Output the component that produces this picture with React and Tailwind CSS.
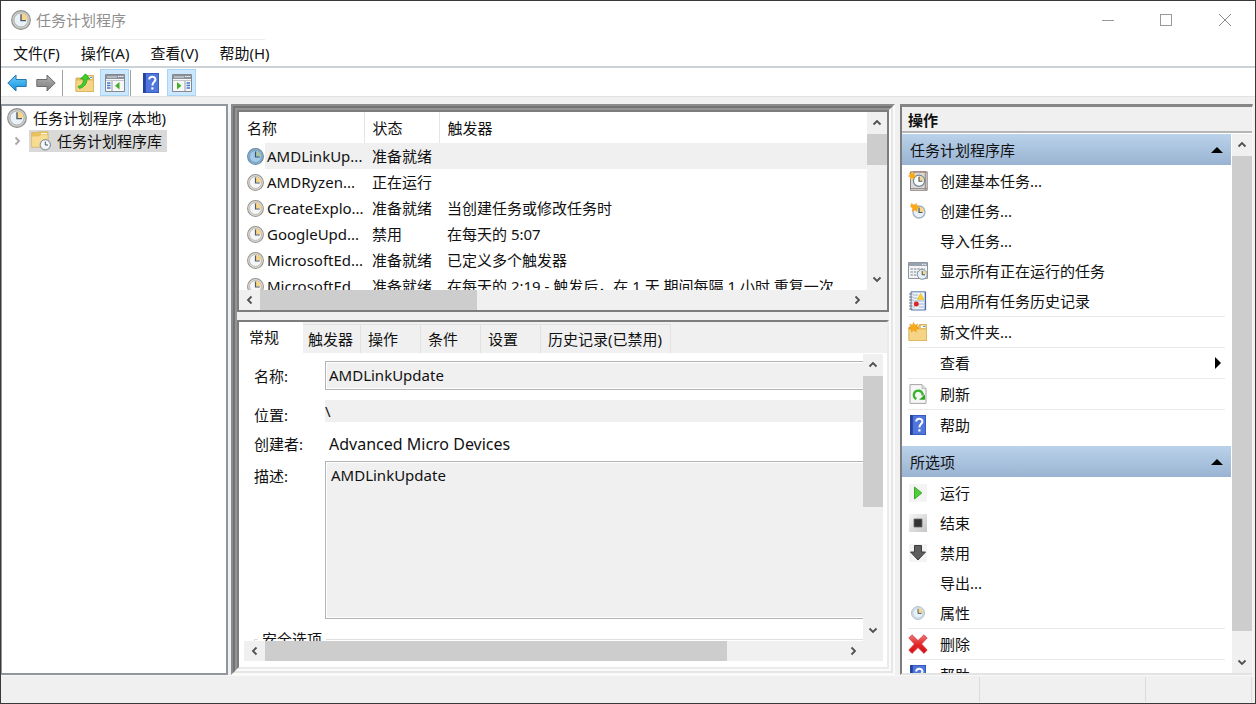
import { useState } from 'react';
import clsx from 'clsx';

const tasks = [
  { name: 'AMDLinkUp...', status: '准备就绪', trigger: '' },
  { name: 'AMDRyzen...', status: '正在运行', trigger: '' },
  { name: 'CreateExplo...', status: '准备就绪', trigger: '当创建任务或修改任务时' },
  { name: 'GoogleUpd...', status: '禁用', trigger: '在每天的 5:07' },
  { name: 'MicrosoftEd...', status: '准备就绪', trigger: '已定义多个触发器' },
  {
    name: 'MicrosoftEd...',
    status: '准备就绪',
    trigger: '在每天的 2:19 - 触发后，在 1 天 期间每隔 1 小时 重复一次',
  },
];

const tabs = [
  { label: '触发器', width: 'w-[58px] pl-[5px]' },
  { label: '操作', width: 'w-[60px] pl-[7px]' },
  { label: '条件', width: 'w-[60px] pl-[7px]' },
  { label: '设置', width: 'w-[60px] pl-[7px]' },
  { label: '历史记录(已禁用)', width: 'w-[130px] pl-[7px]' },
];

/* ---------- Icons ---------- */

const Clock = ({ className, rim = '#8e8e8e', ring = '#cfcfcb', face = '#e9f1f9', wedge = '#f8d58c', hand = '#4c5b68' }) => (
  <svg viewBox="0 0 20 20" className={className} aria-hidden="true">
    <circle cx="10" cy="10" r="9.3" fill={ring} stroke={rim} strokeWidth="1.2" />
    <circle cx="10" cy="10" r="7" fill={face} stroke={rim} strokeWidth="0.6" />
    <path d="M10 10V3.2A6.8 6.8 0 0 1 16.8 10Z" fill={wedge} />
    <path d="M10 4.2V10.6H15" fill="none" stroke={hand} strokeWidth="1.4" />
  </svg>
);

const BackArrow = () => (
  <svg viewBox="0 0 20 18" className="h-[18px] w-5" aria-hidden="true">
    <defs>
      <linearGradient id="back" x1="0" y1="0" x2="0" y2="1">
        <stop offset="0" stopColor="#6fd0fb" />
        <stop offset="1" stopColor="#0d8fe0" />
      </linearGradient>
    </defs>
    <path d="M.8 9 9 1V5.5H19.2V12.5H9V17Z" fill="url(#back)" stroke="#2677ad" strokeLinejoin="round" />
  </svg>
);

const ForwardArrow = () => (
  <svg viewBox="0 0 20 18" className="h-[18px] w-5" aria-hidden="true">
    <defs>
      <linearGradient id="fwd" x1="0" y1="0" x2="0" y2="1">
        <stop offset="0" stopColor="#b3b3b3" />
        <stop offset="1" stopColor="#7d7d7d" />
      </linearGradient>
    </defs>
    <path d="M19.2 9 11 1V5.5H.8V12.5H11V17Z" fill="url(#fwd)" stroke="#6e6e6e" strokeLinejoin="round" />
  </svg>
);

const FolderBase = () => (
  <>
    <path d="M1 5H10L11.5 2.5H18.5V18.5H1Z" fill="#e9c25b" stroke="#cfa648" strokeWidth="0.8" />
    <path d="M13 3.5H17.5V6H13Z" fill="#fff" />
    <path d="M15 4H17.3V5H15Z" fill="#4c92d6" />
    <path d="M1 7H18.5V18.5H1Z" fill="#f5d585" stroke="#d8b45a" strokeWidth="0.8" />
  </>
);

const FolderUp = () => (
  <svg viewBox="0 0 20 20" className="size-5" aria-hidden="true">
    <FolderBase />
    <path d="M3 13.5C7 12.5 8.5 10 8.5 6H5.5L10.5 .8 15 6H12C12 11 9 14.2 4.5 15.5Z" fill="#3fcf2b" stroke="#23921a" strokeWidth="0.7" />
  </svg>
);

const FolderClock = () => (
  <svg viewBox="0 0 20 20" className="size-5" aria-hidden="true">
    <path d="M.6 1.5H7L8 .8H17V16H.6Z" fill="#e9c25b" stroke="#d2ab52" strokeWidth="0.6" />
    <path d="M10 2H16V4H10Z" fill="#fffbe8" />
    <path d="M.6 5H8L10 3.6H17V16H.6Z" fill="#f8dc92" stroke="#deb95f" strokeWidth="0.6" />
    <circle cx="14.3" cy="13.8" r="5.2" fill="#e2e8ec" stroke="#7d8a91" />
    <circle cx="14.3" cy="13.8" r="3.8" fill="#f5f9fc" />
    <path d="M14.3 10.6V14H17" fill="none" stroke="#47565e" />
  </svg>
);

const Star = () => (
  <path
    d="M5.6.5 6.8 3.2 9.8 2.2 8.4 4.8 11 6.4 8 7 8.2 10 5.8 8 3.4 10 3.6 7 .4 6.4 3 4.8 1.6 2.2 4.5 3.2Z"
    fill="#fca918"
    stroke="#e98a08"
    strokeWidth="0.5"
  />
);

const FolderNew = () => (
  <svg viewBox="0 0 20 20" className="size-5" aria-hidden="true">
    <FolderBase />
    <Star />
  </svg>
);

const PaneIcon = ({ flip }) => (
  <svg viewBox="0 0 20 18" className="h-[18px] w-5" aria-hidden="true">
    <path d="M.5.5H19.5V17.5H.5Z" fill="#f7f7f7" stroke="#85898e" />
    <path d="M1 1H19V5H1Z" fill="#8a929c" />
    <path d="M2 3H12" stroke="#dde2e7" />
    <path d="M13 2.5H14.5M15.2 2.5H16.6M17.2 2.5H18.4" stroke="#fff" strokeWidth="1.2" />
    <path d="M1 6.5H19" stroke="#c1c6cc" />
    {flip ? (
      <>
        <path d="M13 7V17" stroke="#9aa0a6" />
        <path d="M14.5 9H18M14.5 11.5H18M14.5 14H18" stroke="#3e78c6" strokeWidth="1.3" />
        <path d="M5 8 9.5 11.8 5 15.5Z" fill="#42b02c" />
      </>
    ) : (
      <>
        <path d="M7 7V17" stroke="#9aa0a6" />
        <path d="M2 9H5.5M2 11.5H5.5M2 14H5.5" stroke="#3e78c6" strokeWidth="1.3" />
        <path d="M14.5 8 10 11.8 14.5 15.5Z" fill="#42b02c" />
      </>
    )}
  </svg>
);

const HelpIcon = () => (
  <svg viewBox="0 0 16 20" className="h-5 w-4 shrink-0" aria-hidden="true">
    <path d="M0 0H16V20H0Z" fill="#3455bd" />
    <path d="M3 .8H15.2V19.2H3Z" fill="#5076dc" />
    <path d="M0 0H2.5V20H0Z" fill="#25429f" />
    <path d="M6.2 6.6C6.2 2.6 12.6 2.8 12.4 6.6 12.2 9.2 9.4 9 9.4 12.4" fill="none" stroke="#fff" strokeWidth="2" />
    <path d="M8.3 14.3H10.5V16.5H8.3Z" fill="#fff" />
  </svg>
);

const BasicTaskIcon = () => (
  <svg viewBox="0 0 20 20" className="size-5" aria-hidden="true">
    <path d="M2.5.8H19.2V19.3H2.5Z" fill="#dcdad8" stroke="#8d8380" />
    <path d="M17.3 1V19M3 17.5H19" stroke="#9b8f8b" strokeWidth="1.2" />
    <path d="M5 1H18" stroke="#a4756b" />
    <circle cx="11" cy="9.8" r="5.6" fill="#fff" stroke="#6f8694" strokeWidth="1.2" />
    <path d="M11 9.8V5A4.8 4.8 0 0 1 15.8 9.8Z" fill="#f6d58c" />
    <path d="M11 5.8V10.2H14.4" fill="none" stroke="#38505e" strokeWidth="1.1" />
    <path d="M3.5 0 4.6 2.4 7.4 1.6 6.2 4 8.6 5.2 6 6 6.2 8.6 4 7 2 8.6 2 6 -.4 5.2 1.8 4 .8 1.8 3 2.4Z" fill="#fca918" />
  </svg>
);

const NewTaskIcon = () => (
  <svg viewBox="0 0 20 20" className="size-5" aria-hidden="true">
    <circle cx="11" cy="11" r="6" fill="#e8f1f7" stroke="#9fb0bb" strokeWidth="1.3" />
    <path d="M11 11V5.8A5.2 5.2 0 0 1 16.2 11Z" fill="#f8d58c" />
    <path d="M11 6.8V11.5H14.5" fill="none" stroke="#3f5664" strokeWidth="1.2" />
    <path d="M3.4 2.4 6 4 8.6 2.4 8.8 5 11.4 6.2 9.2 7.8 9.2 10.6 6.6 9 4 10.4 4.6 7.4 2.6 5.4Z" fill="#fca918" stroke="#ee9410" strokeWidth="0.4" />
  </svg>
);

const RunningIcon = () => (
  <svg viewBox="0 0 20 18" className="h-[18px] w-5" aria-hidden="true">
    <path d="M.5.5H19.5V16.5H.5Z" fill="#f4f4f4" stroke="#8f959c" />
    <path d="M1 1H19V4H1Z" fill="#98a2b0" />
    <path d="M14 2.3H15.4M16.4 2.3H18" stroke="#fff" />
    <path d="M2.5 7H17M2.5 10H10M2.5 13H9" stroke="#9ea7b1" strokeWidth="1.4" strokeDasharray="2.4 1" />
    <circle cx="14.2" cy="12.4" r="4.9" fill="#eaf1f6" stroke="#7f929e" />
    <path d="M14.2 12.4V8.4A4 4 0 0 1 18.2 12.4Z" fill="#f8d58c" />
    <path d="M14.2 9V12.8H17" fill="none" stroke="#3f5664" />
  </svg>
);

const HistoryIcon = () => (
  <svg viewBox="0 0 20 20" className="size-5" aria-hidden="true">
    <path d="M3 .8H17.5V19H3Z" fill="#eef3fa" stroke="#5b79a8" />
    <path d="M17.4 1V19" stroke="#4a6aa0" strokeWidth="1.4" />
    <path d="M5 4H10M5 7H9M5 10H16M11 13H16M11 16H16M5 16H7" stroke="#9fb4d4" />
    <path d="M1 3H4.5M1 6H4.5M1 9H4.5M1 12H4.5M1 15H4.5M1 18H4.5" stroke="#7d7d7d" strokeWidth="1.1" />
    <path d="M12.6 2.4 16 8.4H9.2Z" fill="#fad22c" stroke="#d7ac16" strokeWidth="0.5" />
    <circle cx="8.3" cy="13" r="2.5" fill="#d8262c" />
  </svg>
);

const RefreshIcon = () => (
  <svg viewBox="0 0 20 20" className="size-5" aria-hidden="true">
    <path d="M2 .6H14L18 4.6V19.4H2Z" fill="#f6f6f6" stroke="#a5a5a5" />
    <path d="M14 .6V4.6H18" fill="#ddd" stroke="#b0b0b0" strokeWidth="0.8" />
    <path d="M8.4 15A4.4 4.4 0 1 1 14.6 11.6" fill="none" stroke="#38b52b" strokeWidth="2.4" />
    <path d="M11 15.8H17V10.4Z" fill="#2fa524" />
  </svg>
);

const RunIcon = () => (
  <svg viewBox="0 0 18 18" className="size-[18px]" aria-hidden="true">
    <path d="M0 0H18V18H0Z" fill="#f4f4f4" />
    <path d="M5.5 3 12.8 9 5.5 15Z" fill="#4fce38" stroke="#2fa01f" strokeWidth="0.9" />
  </svg>
);

const EndIcon = () => (
  <svg viewBox="0 0 18 18" className="size-[18px]" aria-hidden="true">
    <defs>
      <linearGradient id="end" x1="0" y1="0" x2="1" y2="1">
        <stop offset="0" stopColor="#f8f8f8" />
        <stop offset="1" stopColor="#c4c4c4" />
      </linearGradient>
    </defs>
    <path d="M0 0H18V18H0Z" fill="url(#end)" />
    <path d="M5 5H13V13H5Z" fill="#333" stroke="#6a6a6a" strokeWidth="0.8" />
  </svg>
);

const DisableIcon = () => (
  <svg viewBox="0 0 18 18" className="size-[18px]" aria-hidden="true">
    <path d="M0 0H18V18H0Z" fill="#f4f4f4" />
    <path d="M5.5 1.5H12.5V8H16.5L9 16 1.5 8H5.5Z" fill="#5e5e5e" stroke="#3c3c3c" strokeLinejoin="round" />
  </svg>
);

const DeleteIcon = () => (
  <svg viewBox="0 0 20 20" className="size-5" aria-hidden="true">
    <defs>
      <linearGradient id="del" x1="0" y1="0" x2="0" y2="1">
        <stop offset="0" stopColor="#f07a7a" />
        <stop offset="0.5" stopColor="#e3282a" />
        <stop offset="1" stopColor="#d80f12" />
      </linearGradient>
    </defs>
    <path
      d="M4 .8 10 6.6 16 .8 19.2 4 13.6 10 19.2 16 16 19.4 10 13.6 4 19.4 .8 16 6.4 10 .8 4Z"
      fill="url(#del)"
      stroke="#c9383a"
      strokeWidth="0.7"
      strokeLinejoin="round"
    />
  </svg>
);

const chevrons = {
  up: 'M1.5 6.5 5 3 8.5 6.5',
  down: 'M1.5 3.5 5 7 8.5 3.5',
  left: 'M6.5 1.5 3 5 6.5 8.5',
  right: 'M3.5 1.5 7 5 3.5 8.5',
};

const Chevron = ({ dir, className = 'size-[10px] text-[#505050]' }) => (
  <svg viewBox="0 0 10 10" className={className} aria-hidden="true">
    <path d={chevrons[dir]} fill="none" stroke="currentColor" strokeWidth="1.8" />
  </svg>
);

/* ---------- Shared parts ---------- */

const ScrollBar = ({ horizontal, thumb, className }) => {
  const arrow = clsx('flex shrink-0 items-center justify-center', horizontal ? 'h-5 w-[21px]' : 'h-[22px] w-5');

  return (
    <div className={clsx('flex shrink-0 bg-[#f0f0f0]', horizontal ? 'h-5' : 'w-5 flex-col', className)}>
      <button type="button" aria-label={horizontal ? '向左滚动' : '向上滚动'} className={arrow}>
        <Chevron dir={horizontal ? 'left' : 'up'} />
      </button>
      <div className="min-h-0 min-w-0 flex-1">
        <div className={clsx('bg-[#cdcdcd]', thumb)} />
      </div>
      <button type="button" aria-label={horizontal ? '向右滚动' : '向下滚动'} className={arrow}>
        <Chevron dir={horizontal ? 'right' : 'down'} />
      </button>
    </div>
  );
};

const actionGroups = [
  {
    title: '任务计划程序库',
    items: [
      { label: '创建基本任务...', icon: <BasicTaskIcon /> },
      { label: '创建任务...', icon: <NewTaskIcon /> },
      { label: '导入任务...' },
      { label: '显示所有正在运行的任务', icon: <RunningIcon /> },
      { label: '启用所有任务历史记录', icon: <HistoryIcon />, divider: true },
      { label: '新文件夹...', icon: <FolderNew />, divider: true },
      { label: '查看', submenu: true, divider: true },
      { label: '刷新', icon: <RefreshIcon />, divider: true },
      { label: '帮助', icon: <HelpIcon /> },
    ],
  },
  {
    title: '所选项',
    items: [
      { label: '运行', icon: <RunIcon /> },
      { label: '结束', icon: <EndIcon /> },
      { label: '禁用', icon: <DisableIcon /> },
      { label: '导出...' },
      { label: '属性', icon: <Clock className="size-[14px]" rim="#a9bac5" ring="#d5e0e7" />, divider: true },
      { label: '删除', icon: <DeleteIcon />, divider: true },
      { label: '帮助', icon: <HelpIcon /> },
    ],
  },
];

/* ---------- Window sections ---------- */

const TitleBar = () => (
  <header className="flex h-[38px] shrink-0 items-center bg-white pr-px pl-[10px]">
    <Clock className="size-5" />
    <h1 className="ml-[5px] flex-1 pb-px text-[#8f8f8f]">任务计划程序</h1>
    <button type="button" aria-label="最小化" className="flex h-full w-[58px] items-center justify-center">
      <span className="h-px w-3 bg-[#999]" />
    </button>
    <button type="button" aria-label="最大化" className="flex h-full w-[58px] items-center justify-center">
      <span className="size-3 border border-[#999]" />
    </button>
    <button type="button" aria-label="关闭" className="flex h-full w-[59px] items-center justify-center">
      <svg viewBox="0 0 12 12" className="size-3" aria-hidden="true">
        <path d="M0 0 12 12M12 0 0 12" stroke="#8a8a8a" />
      </svg>
    </button>
  </header>
);

const MenuBar = () => (
  <nav className="h-[29px] shrink-0 border-b-2 border-[#ccd3d8] bg-white">
    <div className="flex h-full w-[264px] items-center gap-[21px] border-t border-[#ececec] pb-px pl-3 whitespace-nowrap">
      {['文件(F)', '操作(A)', '查看(V)', '帮助(H)'].map((label) => (
        <button key={label} type="button">
          {label}
        </button>
      ))}
    </div>
  </nav>
);

const ToolBar = () => (
  <div className="flex h-[29px] shrink-0 items-center border-b border-[#e3e3e3] bg-white pt-px pl-[6px]">
    <button type="button" aria-label="后退">
      <BackArrow />
    </button>
    <button type="button" aria-label="前进" className="ml-[9px]">
      <ForwardArrow />
    </button>
    <span className="ml-[6px] h-[26px] w-px bg-[#a0a0a0]" />
    <button type="button" aria-label="向上" className="ml-3">
      <FolderUp />
    </button>
    <button
      type="button"
      aria-label="显示/隐藏控制台树"
      className="ml-[5px] flex h-[27px] w-[29px] items-center justify-center border border-[#a9d6f8] bg-[#cce8ff]"
    >
      <PaneIcon />
    </button>
    <span className="ml-px h-[26px] w-px bg-[#a0a0a0]" />
    <button type="button" aria-label="帮助" className="ml-3">
      <HelpIcon />
    </button>
    <button
      type="button"
      aria-label="显示/隐藏操作窗格"
      className="ml-2 flex h-[27px] w-[29px] items-center justify-center border border-[#a9d6f8] bg-[#cce8ff]"
    >
      <PaneIcon flip />
    </button>
  </div>
);

const TreePane = () => (
  <aside className="w-[227px] shrink-0 border-2 border-l border-[#8f969d] bg-white">
    <div className="flex h-6 items-center pl-[5px]">
      <Clock className="size-5" />
      <span className="ml-[6px]">任务计划程序 (本地)</span>
    </div>
    <div className="flex h-[22px] items-center pl-[10px]">
      <Chevron dir="right" className="size-[10px] text-[#a6a6a6]" />
      <div className="ml-[7px] flex h-[22px] items-center bg-[#d9d9d9] pr-[5px] pl-[2px]">
        <FolderClock />
        <span className="ml-[6px] pb-px">任务计划程序库</span>
      </div>
    </div>
  </aside>
);

const TaskList = () => {
  const [selected, setSelected] = useState(0);

  return (
    <section className="flex h-[202px] shrink-0 flex-col border-2 border-[#7d7d7d] bg-[#f0f0f0]">
      <div className="flex min-h-0 flex-1">
        <div className="min-w-0 flex-1 overflow-hidden bg-white">
          <table className="w-full table-fixed border-collapse text-left whitespace-nowrap">
            <thead>
              <tr className="h-[31px]">
                <th className="w-[125px] border-r border-[#e5e5e5] pl-2 font-normal">名称</th>
                <th className="w-[75px] border-r border-[#e5e5e5] pl-2 font-normal">状态</th>
                <th className="pl-2 font-normal">触发器</th>
              </tr>
            </thead>
            <tbody>
              {tasks.map((task, i) => {
                const bg = i === selected && 'bg-[#f0f0f0]';
                return (
                  <tr key={i} className="h-[26px]" onClick={() => setSelected(i)}>
                    <td className="p-0">
                      <div className="flex h-[26px] items-center pl-2">
                        {i === selected ? (
                          <Clock className="size-[17px] shrink-0" rim="#6688a3" ring="#86b2d3" face="#a5cbe8" wedge="#a9c6a8" hand="#36566f" />
                        ) : (
                          <Clock className="size-[17px] shrink-0" rim="#98948f" ring="#dcd8d3" face="#f6f6f6" />
                        )}
                        <span className={clsx('ml-px h-[26px] flex-1 pl-[2px] leading-[26px]', bg)}>{task.name}</span>
                      </div>
                    </td>
                    <td className={clsx('p-0 pl-2', bg)}>{task.status}</td>
                    <td className={clsx('p-0 pl-2', bg)}>{task.trigger}</td>
                  </tr>
                );
              })}
            </tbody>
          </table>
        </div>
        <ScrollBar thumb="h-[23%]" />
      </div>
      <ScrollBar horizontal thumb="h-full w-[37%]" className="mr-5" />
    </section>
  );
};

const GeneralForm = () => (
  <form className="grid min-w-0 flex-1 grid-cols-[71px_1fr] content-start items-start overflow-hidden pt-[7px] pl-[10px]">
    <label htmlFor="name" className="pt-1">名称:</label>
    <div className="mb-[10px] h-[29px] border border-r-0 border-[#b4b4b4] bg-white p-px pr-0">
      <input id="name" readOnly value="AMDLinkUpdate" className="block h-full w-full bg-[#f0f0f0] pb-[2px] pl-[2px] outline-none" />
    </div>

    <label htmlFor="location" className="pt-1">位置:</label>
    <input id="location" readOnly value="\" className="mb-[11px] block h-[22px] w-full bg-[#f0f0f0] outline-none" />

    <span>创建者:</span>
    <span className="mb-[6px] h-[22px] pl-1 text-base leading-[22px]">Advanced Micro Devices</span>

    <label htmlFor="description" className="pt-1">描述:</label>
    <div className="mb-[9px] h-[158px] border border-r-0 border-[#b4b4b4] bg-white p-px pr-0">
      <textarea
        id="description"
        readOnly
        value="AMDLinkUpdate"
        className="block h-full w-full resize-none bg-[#f0f0f0] pt-px pl-1 outline-none"
      />
    </div>

    <fieldset className="col-span-2 h-20 border border-r-0 border-[#e0e0e0] pl-[3px]">
      <legend className="px-1">安全选项</legend>
    </fieldset>
  </form>
);

const DetailsPane = () => (
  <section className="mt-2 flex min-h-0 flex-1 flex-col border-2 border-t-[#7d7d7d] border-r-[#ebebeb] border-b-[#ebebeb] border-l-[#7d7d7d] bg-[#f0f0f0]">
    <div className="flex h-[31px] shrink-0 items-end whitespace-nowrap" role="tablist">
      <button type="button" role="tab" aria-selected="true" className="h-full w-16 bg-white pb-[2px] pl-[10px] text-left">
        常规
      </button>
      {tabs.map((tab) => (
        <button
          key={tab.label}
          type="button"
          role="tab"
          aria-selected="false"
          className={clsx('h-[29px] border-t border-r border-[#e2e2e2] text-left', tab.width)}
        >
          {tab.label}
        </button>
      ))}
    </div>
    <div className="flex min-h-0 flex-1 flex-col bg-white pt-px pr-1 pb-[6px] pl-[5px]">
      <div className="flex min-h-0 flex-1">
        <GeneralForm />
        <ScrollBar thumb="h-[54%]" />
      </div>
      <div className="bg-[#f0f0f0] pr-5">
        <ScrollBar horizontal thumb="h-full w-[80%]" />
      </div>
    </div>
  </section>
);

const ActionsPane = () => (
  <aside className="flex w-[353px] shrink-0 flex-col border-t-[3px] border-r border-b-2 border-l-2 border-t-[#868686] border-r-[#f8f8f8] border-b-[#e3e3e3] border-l-[#7d7d7d] bg-white">
    <h2 className="h-[26px] shrink-0 border-b-2 border-[#b5b5b5] bg-[#f0f0f0] pl-[6px] leading-[26px] font-bold">操作</h2>
    <div className="flex min-h-0 flex-1 pt-px">
      <div className="min-w-0 flex-1 overflow-hidden">
        {actionGroups.map((group) => (
          <div key={group.title} className="mb-[6px]">
            <button
              type="button"
              className="mb-px flex h-[31px] w-full items-center justify-between bg-linear-to-b from-[#bad2ea] to-[#99b3d2] pr-2 pl-2"
            >
              {group.title}
              <svg viewBox="0 0 12 6" className="h-[6px] w-3" aria-hidden="true">
                <path d="M6 0 12 6H0Z" fill="#000" />
              </svg>
            </button>
            {group.items.map((item) => (
              <div key={item.label} className="pr-[6px] pl-[6px]">
                <button type="button" className="flex h-[30px] w-full items-center text-left">
                  <span className="flex w-5 justify-center">{item.icon}</span>
                  <span className="ml-3 flex-1">{item.label}</span>
                  {item.submenu && (
                    <svg viewBox="0 0 6 12" className="mr-1 h-3 w-[6px]" aria-hidden="true">
                      <path d="M0 0 6 6 0 12Z" fill="#000" />
                    </svg>
                  )}
                </button>
                {item.divider && <hr className="border-[#e9e9e9]" />}
              </div>
            ))}
          </div>
        ))}
      </div>
      <ScrollBar thumb="h-[96%]" className="ml-px" />
    </div>
  </aside>
);

const StatusBar = () => (
  <footer className="flex h-[28px] shrink-0 border-t border-[#f8f8f8] py-px">
    <span className="flex-1 border-r border-[#dcdcdc]" />
    <span className="w-[166px] border-r border-[#dcdcdc]" />
    <span className="w-[106px] border-r border-[#dcdcdc]" />
    <span className="w-[3px]" />
  </footer>
);

export default function App() {
  return (
    <div className="flex h-screen flex-col overflow-hidden border border-[#3b3837] bg-[#f0f0f0] font-['Noto_Sans','Noto_Sans_CJK_SC',sans-serif] text-[15px] leading-[22px] text-[#111]">
      <TitleBar />
      <MenuBar />
      <ToolBar />
      <main className="flex min-h-0 flex-1 pt-[7px] pr-[2px]">
        <TreePane />
        {/* Beveled frame: three stacked edges, dark on the top left and light on the bottom right */}
        <div className="ml-[3px] flex min-w-0 flex-1 border-2 border-t-[#8c8c8c] border-r-[#fafafa] border-b-[#fafafa] border-l-[#8c8c8c]">
          <div className="flex min-w-0 flex-1 border-2 border-t-[#737373] border-r-[#e6e6e6] border-b-[#e6e6e6] border-l-[#737373]">
            <div className="flex min-w-0 flex-1 flex-col border-2 border-t-[#949494] border-r-[#fafafa] border-b-[#fafafa] border-l-[#949494]">
              <TaskList />
              <DetailsPane />
            </div>
          </div>
        </div>
        <div className="w-[5px] shrink-0" />
        <ActionsPane />
      </main>
      <StatusBar />
    </div>
  );
}
